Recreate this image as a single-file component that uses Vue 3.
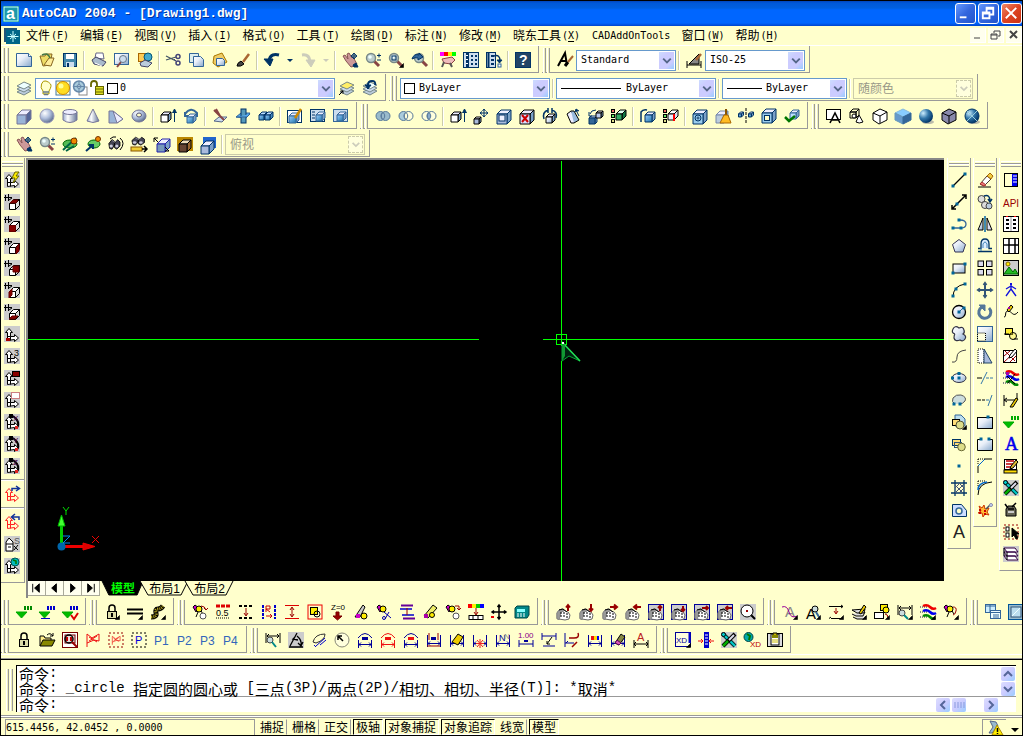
<script setup>
import { ref } from 'vue'

const p = (d, s = '#000', f = 'none', w = 1) => `<path d="${d}" stroke="${s}" fill="${f}" stroke-width="${w}"/>`
const r = (x, y, w, h, f = 'none', s = 'none') => `<rect x="${x}" y="${y}" width="${w}" height="${h}" fill="${f}" stroke="${s}"/>`
const c = (x, y, n, f = 'none', s = 'none', w = 1) => `<circle cx="${x}" cy="${y}" r="${n}" fill="${f}" stroke="${s}" stroke-width="${w}"/>`
const el = (x, y, a, b, f = 'none', s = 'none') => `<ellipse cx="${x}" cy="${y}" rx="${a}" ry="${b}" fill="${f}" stroke="${s}"/>`
const tx = (x, y, t, n, f) => `<text x="${x}" y="${y}" font-size="${n}" fill="${f}">${t}</text>`
const dashed = (s, d) => s.replace('/>', ` stroke-dasharray="${d}"/>`)
const G = 'url(#steel)', B = 'url(#blue)', N = '#036', S = '#369', K = '#000', R = '#900'

const cube = (x, y, s, d, f = G, st = K, top = '#eef', side = '#7ba0c8') =>
  p(`M${x} ${y + d}l${d} ${-d}h${s}l${-d} ${d}z`, st, top) + p(`M${x + s} ${y + d}l${d} ${-d}v${s}l${-d} ${d}z`, st, side) + p(`M${x} ${y + d}h${s}v${s}h${-s}z`, st, f)
const glass = (x = 6, y = 6) => p(`M${x + 3} ${y + 3}L${x + 8} ${y + 8}`, '#844', 'none', 3) + c(x, y, 4.5, '#bcc', '#788', 1.4) + c(x - 1, y - 1, 1.8, '#eff')
const corner = p('M15.5 11.5v4h-4z', K, K, 0.6)
const dot = (...a) => a.map(([x, y]) => r(x - 1.5, y - 1.5, 3, 3, '#069')).join('')
const pen = (x = 6, y = 2) => p(`M${x} ${y + 9}l1 -3l5 -6l2 2l-5 6z`, K, '#db3')
const hand = p('M1 4l2-1 3 4-1-5 2-1 3 5 1-1 4 7-2 2-4 1-5-6z', '#855', '#c99') + p('M11 13l3-2 2 4h-4z', N, N)
const layers = p('M1 12l7 3 7-4-7-3z', '#788', '#bcd') + p('M1 9l7 3 7-4-7-3z', '#788', '#cde') + p('M1 6l7 3 7-4-7-3z', '#788', '#eff')
const cross4 = (x, y, n, s, w = 1) => p(`M${x - n} ${y}h${2 * n}M${x} ${y - n}v${2 * n}M${x - 1.5} ${y - n + 2}l1.5-2 1.5 2M${x - 1.5} ${y + n - 2}l1.5 2 1.5-2M${x - n + 2} ${y - 1.5}l-2 1.5 2 1.5M${x + n - 2} ${y - 1.5}l2 1.5-2 1.5`, s, 'none', w)
const grey = r(0, 0, 16, 16, '#ccc')
const axis = (s = K, f = '#fff') => p('M3.5 14.5v-8h-2l3.5-4 3.5 4h-2v4h4v-2l4 3.5-4 3.5v-2z M3.5 10.5h3v4', s, f)
const ucs = grey + axis()
const house = grey + p('M1.5 1v6M4.5 0v7M0 3.5h8M5 6l3-2', K) + cube(5.5, 5.5, 6, 4, '#fff', K, '#fff', '#ddd')
const face = (d) => house + p(d, '#600', '#800')
const bin = p('M1 7l4-5 3 2v5l-3 5-3-1zM8 7l4-5 3 3v5l-4 4-3-2z', K, '#445') + c(4, 10, 2, '#ccd') + c(11, 10, 2, '#ccd') + p('M5 3l3 2 3-2', '#99a')
const tools = p('M2 2l12 12', '#033', 'none', 4) + p('M2 2l12 12', '#0cc', 'none', 2) + p('M14 2L2 14', K, 'none', 4) + p('M13 3L8 8', '#dde', 'none', 2) + p('M7 9l-5 5', '#0a0', 'none', 2.5) + c(2.5, 2.5, 2, '#0cc', K)
const dim = (s = '#009') => p('M1.5 3v12M14.5 3v12M2 11.5h12M4 9.5l-2 2 2 2M12 9.5l2 2-2 2', s)
const arc = (s, q = s) => p('M1.5 8v8M14.5 8v8M2 12.5h12M4 10.5l-2 2 2 2M12 10.5l2 2-2 2', s) + p('M1 6q7-9 14 0', s) + r(5, 5, 6, 3, q)
const fist = p('M1 15V9l2-3 4-1 2 2 3 1 2 3-1 4-4 1-6-1z', '#666', '#fff') + p('M1 14V9l2-3 3-1 2 2-3 1-1 4-1 4z', '#888', '#999') + dashed(p('M5 8v6M8 8v6M11 9v6', K, 'none', 1), '2 1') + p('M3 6l4-1 4 3', K)
const fistBox = (d) => r(0.5, 0.5, 15, 15, '#ccc', '#009') + fist + p(d, R, 'none', 2)
const gy = p('M1 3l2-2 4 3-3 4z', K, '#c0c') + c(7, 5, 3, '#fe0', K)
const loop = c(11, 12, 3, '#fff', '#555')
const paint = gy + p('M6 8l-2 5M9 7l2 3', K)
const rings = (a, b, m) => c(5.5, 8, 4.5, a, '#579') + c(10.5, 8, 4.5, b, '#579') + p('M8 4.3q3.5 3.7 0 7.4q-3.5-3.7 0-7.4', '#579', m)
const lock = p('M5 7V4q0-3 3-3t3 3v3', K, 'none', 1.5) + r(3.5, 7.5, 9, 7, '#dda', K) + r(7, 9, 2, 4, K)
const tri = (s, e = '') => p('M0 8h11l-5.5 6z', '#0a0', '#0b0') + r(8, 2, 2, 4, s) + r(11, 2, 2, 4, s) + r(14, 2, 2, 4, s) + e
const dashes = dashed(p('M1 2h14M1 14h14', K, 'none', 2), '3 2')
const brush = p('M2 14q0-3 4-5l3 3q-3 3-7 2z', K, '#444') + p('M8 10l6-8', '#a63', 'none', 2.5)
const tri3 = dashed(p('M0 3h8M0 8h8M0 13h8', '#888', 'none', 2), '1 1') + p('M3 2q4-2 7 1t6 1', '#e00', 'none', 2.5) + p('M3 7q4-2 7 1t6 1', '#00e', 'none', 2.5) + p('M3 12q4-2 7 1t5 1', '#080', 'none', 2.5)
const poly = p('M1 13C4 13 1 7 5 7S10 14 15 8', K)
const flag = (s) => p('M2 15V2l5 4 7-4v7l-5-1-7 3M4 5l8 5M12 4l-8 5', s)
const dashBox = (s) => dashed(r(1, 1, 14, 14, 'none', s), '2 2')
const dimPen = dim() + p('M3 10l6-8 5 3-5 8z', K, '#ec0')
const marks = r(0.5, 1.5, 3, 3, '#e66', K) + r(0.5, 6.5, 3, 3, '#6e6', K) + r(0.5, 11.5, 3, 3, '#dd8', K)
const spin = (t) => ucs + p('M9 2q8 6 4 12', K, 'none', 2) + r(5, 0, 4, 4, K) + tx(9, 7, t, 8, '#404') + r(11, 12, 3, 3, '#d22')

const icons = {
  app: r(0, 0, 16, 16, '#087') + r(1, 1, 14, 14, '#1a99aa', '#cff') + `<text x="3" y="13" font-size="16" font-weight="bold" fill="#fff">a</text>`,
  drawing: r(0, 0, 13, 14, '#257') + r(2, 2, 14, 14, '#068') + p('M9 3v11M3.5 8.5h11M6 6l6 5M12 6l-6 5', '#cff'),
  new: p('M.5 1.500h12l3 3v10h-15z', S, G) + p('M12.500 1.500v3h3', S, '#fff'),
  open: p('M1 4h5l1-2h6l-2 11-7 1z', '#862', '#ed6') + p('M5 13L10 6h5l-3 8z', '#862', '#fe9') + p('M3 3q6-3 8 3', '#474', 'none', 1.5),
  save: r(1.5, 1.5, 13, 13, '#48a', N) + r(4, 2, 8, 5, '#fff') + r(4, 10, 8, 5, '#cde') + r(5, 11, 2, 4, N),
  print: p('M4 6l1-5h7l1 6z', '#668', '#fff') + p('M1 8l4-3 10 5-3 4-9-2z', '#446', '#abc') + p('M4 11l7 3', '#fff'),
  preview: r(0.5, 1.5, 14, 11, G, S) + p('M7 10l-4 5', '#844', 'none', 2) + c(9, 7, 3.5, '#cde', '#678'),
  publish: r(1.5, 1.5, 7, 8, '#fc5', '#a60') + c(11, 5, 4, '#4ac', '#057') + p('M3 11l5-3 7 3-4 4-7-1z', '#446', '#bcd'),
  cut: p('M0 4l10 5M0 8l10-3', '#456', 'none', 1.3) + c(12, 4.5, 2, 'none', '#447', 1.5) + c(12, 11, 2, 'none', '#447', 1.5) + p('M8 7l3 3', '#447'),
  copy: p('M.5 1.5h9v9h-9z', S, '#dee') + p('M4.5 4.5h7l3 3v7h-10z', S, G),
  paste: p('M2 4l8-3 5 9-9 5-5-4z', '#a70', '#ec6') + p('M4.5 6.5h6l2 2v5h-8z', S, G),
  match: brush,
  undo: p('M5 9C6 2 11 2 15 3', N, 'none', 3) + p('M0 7h9l-3 7z', N, N),
  redo: p('M2 3q7-1 8 6', '#ccb', 'none', 3) + p('M6 8h9l-4 7z', '#ccb', '#ccb'),
  pan: hand + cross4(12, 4, 3, N),
  zoomrt: glass() + p('M12 3.5h4M14 1.5v4M12 8h4', N),
  zoomwin: glass() + r(4, 4, 4, 4, 'none', N) + corner,
  zoomprev: glass(8, 6) + p('M1 7q2-6 7-4v-2l4 4-5 3v-2q-3-1-6 1z', N, S),
  props: r(0, 0, 4, 4, '#f0f') + r(4, 0, 4, 4, '#f00') + r(8, 0, 4, 4, '#fe0') + r(12, 0, 4, 4, '#0f0') + p('M2 7l10-2 3 3-4 4-7-1z', '#844', '#ebb') + p('M4 10l-2 5M10 11l2 4', '#555', 'none', 2),
  center: r(0.5, 0.5, 15, 15, '#cde', N) + p('M4.5 1v14', N, 'none', 3) + [3, 7, 11].map(y => r(8, y, 2, 2, N) + r(12, y, 2, 2, N) + r(3, y, 2, 1, '#fff')).join(''),
  palette: r(0.5, 0.5, 9, 15, '#cde', N) + p('M2.5 1v14', N, 'none', 2) + [3, 7, 11].map(y => r(5, y, 3, 2, N)).join('') + p('M8 4q6-2 6 5', N, 'none', 1.5) + p('M11 8h5l-2.5 3z', N, N) + r(12, 12, 3, 3, '#fff', S),
  help: r(0.5, 0.5, 15, 15, '#246', N) + `<text x="4" y="13" font-size="14" font-weight="bold" fill="#fff">?</text>`,
  textstyle: p('M1 14L8 1l2 12M3 9h6', K, 'none', 2) + p('M8 14l3-4', K, 'none', 3) + p('M11 10l5-6', '#a63', 'none', 2),
  dimstyle: p('M1 9v7M15 9v7M1 13h14', K) + p('M3 12L13 2v10z', K, '#888') + p('M10 8l5-6', '#a63', 'none', 2.5),
  layers, layercur: layers.replaceAll('#eff', '#fe6') + p('M0 15l4-4M1.5 11H4v2.5', K),
  layerprev: layers + p('M6 9V5q0-4 4-4t3 4', N, 'none', 2) + p('M3 5h6l-3 4z', N, N),
  bulb: p('M5 11q-3-3-1.5-7T8 1t4.5 3T11 11v3H5z', '#a90', '#ffc') + p('M5 12h6M6 14.5h4', '#678', 'none', 1.5),
  sun: r(1, 1, 14, 14, '#ffc', '#47a') + c(8, 8, 6.5, '#fd2', '#c80') + c(6, 6, 2.5, '#ff9'),
  freeze: r(7, 7, 8, 8, '#fff', '#888') + c(7, 6.5, 5.5, '#acd', '#68a', 1.5) + c(7, 6.5, 2, '#eff', '#68a') + p('M1 6.5h12M7 1v11', '#68a'),
  unlock: p('M2 7V4q0-3 3-3t3 3v4', '#660', 'none', 1.8) + r(6.5, 6.5, 8, 8, '#dd2', '#660') + p('M7 9h7M7 12h7', '#660'),
  swatch: r(1.5, 3.5, 10, 10, '#fff', K),
  box: cube(1, 2, 9, 5, '#9ab4d8', '#779', '#eef', '#569'),
  sphere: c(8, 8, 7, 'url(#ball)', '#99b'),
  cylinder: p('M1 4v8q7 5 14 0V4', '#779', 'url(#tube)') + el(8, 4, 7, 2.5, '#eef', '#779'),
  cone: p('M8 1L2 13q6 3 12 0z', '#779', 'url(#tube)'),
  wedge: p('M1 3h4l10 8-6 4H1z', '#779', '#9ab4d8') + p('M5 3l10 8-6 4z', '#779', '#eef'),
  torus: el(8, 8, 7, 6, 'url(#ball)', '#779') + el(8, 7, 2.5, 2, '#ffc', '#557'),
  extrude: cube(1, 4, 7, 3, '#fff') + p('M14.5 14V2M12.5 5l2-4 2 4', N, N),
  revolve: cube(4, 6, 6, 3, B, S) + p('M2 6Q8-2 14 5v4M2 4v4h3', S, 'none', 2),
  slice: p('M2 13l5-4h8l-5 5z', '#568', '#cde') + p('M2 2l10 10M4 1l4 7', '#844', 'none', 2),
  section: p('M1 9l5-4h9l-4 5z', S, '#5ae') + r(6, 1, 5, 14, '#59b', N) + p('M1 9h11l3-3', S, '#5ae'),
  interfere: cube(1, 4, 5, 3, B, N, '#bdf', '#48b') + cube(7, 4, 5, 3, B, N, '#bdf', '#48b'),
  setdraw: r(0.5, 2.5, 14, 12, '#fff', N) + cube(2, 5, 7, 3, B, S) + p('M8 10l6-9', '#c80', 'none', 2.5),
  setview: r(0.5, 1.5, 14, 12, '#cde', N) + cube(6, 4, 6, 3, B, S) + p('M2 4h3M2 7h3M2 10h3', N),
  setprof: r(0.5, 1.5, 14, 12, '#cde', S) + cube(4, 4, 6, 3, B, S),
  union: rings('#9bc', '#9bc', '#9bc'), subtract: rings('#acd', '#ffd', '#ffd'), intersect: rings('#ffd', '#ffd', '#8ac'),
  moveface: cube(1, 9, 5, 2, '#abd') + cross4(11, 5, 4, N),
  offsetface: cube(1, 2, 10, 4, '#abd', N) + r(3, 7, 6, 6, '#eef', N),
  delface: cube(1, 2, 10, 4, '#ddf') + p('M3 7l6 7M9 7l-6 7', '#c00', 'none', 2),
  rotface: cube(4, 6, 6, 3) + p('M2 11Q0 4 6 2M14 10q2-6-4-8M6 0v5M10 0v5', N, 'none', 1.5),
  taper: p('M2 6l4-3 5 8-2 4H6z', K, '#eef') + p('M6 3h3l5 9-5 3', K, '#9bd') + p('M14 8l-3-6M10 4l1-3 3 2', N, N),
  copyface: cube(1, 8, 6, 2, '#369', N) + cube(8, 3, 5, 2, '#bce') + p('M2 6q1-4 6-4M1 4v4h3', N),
  colorface: marks + cube(5, 2, 6, 4, '#3a6', K, '#dfe', '#174'),
  copyedge: cube(5, 4, 7, 3, B, N) + p('M1 14V4q2-3 6-2', N, 'none', 1.5),
  coloredge: marks + cube(5, 2, 6, 4, '#eef', K, '#fff', '#dde') + p('M11 6v7', '#f00', 'none', 2),
  imprint: cube(1, 2, 10, 4, '#9ce', N) + c(6, 10, 3, 'none', N) + c(6, 10, 1, '#fff', N),
  clean: cube(1, 3, 8, 4, '#bcd', '#78a') + p('M11 1v6', '#850', 'none', 2) + p('M9 7h4l3 8H5z', '#a60', '#fb2'),
  separate: cube(0.5, 4, 3, 2, B, N) + cube(10.5, 4, 3, 2, B, N) + dashed(p('M8 0v16', K), '3 1'),
  shell: cube(1, 1, 10, 4, '#9ce', N) + r(3.5, 7.5, 5, 5, '#ffc', N),
  check: cube(6, 2, 6, 3, '#bdf', S) + p('M1 9l4 4 6-5', '#070', 'none', 2.5),
  shade2d: r(0.5, 1.5, 14, 10, '#fff', K) + p('M4 15l5-10 5 10M6 12h6', K, 'none', 1.6),
  shade3d: cube(1, 1, 6, 3, 'none', K, 'none', 'none') + p('M10 7l-3 7q3 2 7 0z', K, '#fff') + c(5, 8, 2, '#fff', K),
  hidden: p('M1 5l7-4 7 3v8l-8 4-6-4z', K, '#fff') + p('M1 5l7 3 7-4M8 8v7', K),
  flat: p('M0 5l8-4 8 4-8 4z', '#8bd', '#8cf') + p('M0 5l8 4v7l-8-4z', '#69b', '#69c') + p('M16 5L8 9v7l8-4z', '#369', '#369'),
  gouraud: el(10, 14, 6, 2, '#bba') + c(8, 8, 7, 'url(#deep)'),
  flatedge: p('M1 5l7-4 7 3v8l-8 4-6-4z', K, '#88a') + p('M1 5l7 3 7-4M8 8v7', K),
  gouraudedge: el(10, 14, 6, 2, '#bba') + c(8, 8, 7, 'url(#deep)', N) + p('M3 3l10 10M13 3L3 13', '#9cd', 'none', 1),
  orbit: el(8, 8, 7, 4, '#5b5', '#060') + p('M1 14L14 2M4 15l8-5', '#064', 'none', 2) + c(12, 5, 3, '#e80', '#730'),
  orbit2: el(9, 8, 6, 4, '#6c6', '#060') + c(13, 3, 2.5, '#e80', '#730') + p('M1 15l7-6M4 9h4v4', N, 'none', 2),
  swivel: `<g transform="translate(0 2) scale(.8)">${bin}</g>` + p('M12 2q6 5 0 12M2 3q3-3 6-2', K),
  distance: `<g transform="scale(.9 .65)">${bin}</g>` + r(0, 11, 11, 4, '#ec3', '#850') + p('M11 13h5M13 10l3 3-3 3', K, 'none', 1.5),
  clip: cube(3, 3, 8, 5, '#79b', '#22a') + p('M0 2l4 4M0 2h4M0 2v4M15 15l-4-4M15 15h-4', K),
  clipf: r(0, 1, 16, 14, '#b80') + cube(2, 4, 8, 4, '#643', K, '#edb', '#963'),
  clipb: r(3, 1, 13, 11, '#26c') + cube(1, 5, 8, 5, '#abd', N),

  ucs: ucs + p('M11 0l-3 6h3l-2 5 6-7h-3l3-4z', '#660', '#fe0'),
  utop: face('M6 9l3-3h5l-2 3z'), ufront: face('M5.5 9.5h6v6h-6z'), uright: face('M12 10l3-4v7l-3 3z'), uback: face('M9 6h6v6H9z'), uleft: face('M5 10l3-3v6l-3 3z'), ubottom: face('M5 15l3-3h6l-3 3z'),
  uorigin: ucs + r(2, 12, 4, 3, '#a00'), u3: ucs + tx(10, 8, '3', 9, K), uview: ucs + r(8.5, 1.5, 7, 5, '#800', K), uobj: ucs + r(7, 0, 9, 7, '#fff') + dashed(r(7.5, 0.5, 8, 6, 'none', R), '1 1'),
  ux: spin('X'), uy: spin('Y'), uz: spin('Z'),
  uapply: axis('#f22', 'none') + p('M8 5V2.5h7M12 0l3.5 2.5L12 5', '#139', 'none', 1.5),
  uprev: axis('#f22', 'none') + p('M15 6V3H8M11 0L7.5 3 11 6', '#139', 'none', 1.5),
  unamed: grey + p('M2 15V6L5 2l4 4v9zM2 8h7M4 11h3', K, '#fff') + tx(10, 8, 'S', 9, '#555') + p('M10 10l4 4M14 9l-4 5'),
  world: ucs + c(11, 4, 4, '#0bb', '#055') + p('M9 2l3 1v3', '#070', 'none', 1.5),

  line: p('M2 14L14 2', K, 'none', 1.3) + dot([2, 14], [14, 2]),
  xline: p('M1 15L15 1M1 11v4h4M15 5V1h-4', K, 'none', 1.5) + dot([6, 10]),
  pline: p('M2 12h8q5 0 5-4t-6-4', S, 'none', 1.3) + dot([2, 12], [10, 12], [8, 4]),
  polygon: p('M8 1.5l6.5 5-2.5 7.5H4L1.5 6.5z', '#335', G),
  rect: r(2, 4, 12, 9, G, K) + dot([2, 13], [14, 4]),
  arc: p('M2 15Q2 4 14 2', K) + dot([2, 14], [5, 7], [14, 2]),
  circle: c(8, 8, 6.5, G, K, 1.3) + p('M8 8l4-4', S) + dot([8, 8], [13, 4]),
  cloud: p('M4 8q-4-1-2-5t6-1q4-2 5 2 1 3-1 4 4 2 2 5-2 3-5 1-5 2-6-2 0-3 1-4', '#334', G, 1.2),
  spline: p('M1 14q5 1 5-5T15 2', '#444'),
  ellipse: el(8, 8, 7, 4.5, G, '#334') + dot([1.5, 8], [8, 3.5], [8, 8]),
  earc: p('M4 12Q0 10 2 6q3-4 8-3 6 2 4 6-2 3-6 3', '#555', '#cdd') + dot([3, 12], [9, 12]),
  insert: p('M4 1h6l4 4v7H4z', S, '#bde') + r(1.5, 5.5, 7, 6, '#fd7', K) + c(9, 11, 4, '#dd8', '#553') + corner,
  block: r(1.5, 3.5, 8, 6, '#fd7', N) + r(3.5, 6.5, 7, 5, 'none', '#357') + c(10.5, 11, 3.8, '#dd8', '#663'),
  point: dot([8, 8]),
  hatch: p('M4 0v16M13 0v16M0 3h16M0 13h16', N, 'none', 1.3) + p('M4 8l5-5M4 13L13 4M8 13l5-5M4 5l8 8M8 3l5 5', '#457'),
  region: p('M1.5 2.5h9l5 6v6h-14z', N, '#cdf') + c(8, 9, 3, '#ffc', S, 1.5),
  mtext: tx(2, 14, 'A', 18, '#222'),
  erase: p('M1 15h13', K) + p('M3 12l7-8 4 3-7 7z', '#433', '#fff') + p('M10 4l3-3 3 3-2 3z', '#a60', '#ec4') + p('M3 12l2-2 4 3-2 1z', '#a33', '#e77'),
  copyo: c(4.5, 5, 3.5, '#ddd', '#444') + c(8, 11, 3.5, '#ddd', '#444') + c(12, 12, 3, '#bcd', '#444') + p('M7 2q6-2 6 5M11 5l2 3 2-3', N, 'none', 1.5),
  mirror: p('M6 2v12H1z', K, G) + p('M10 2v12h5z', K, '#dde') + p('M8 0v16', '#06a', 'none', 1.5),
  offset: p('M1 13.5h14M1 10.5h3V6q0-5 4-5t4 5v4.5h3', N, '#def', 1.3) + p('M4 13V10M6 10V6q2-4 4 0v4', '#48b'),
  array: [[1, 1], [9.5, 1], [1, 9.5], [9.5, 9.5]].map(a => r(a[0], a[1], 5.5, 5.5, '#dde', K)).join(''),
  move: cross4(8, 8, 7, '#357', 2),
  rotate: p('M5 3a6 6 0 1 0 7 1', '#579', 'none', 3) + p('M2 1h6v6z', '#579', '#579'),
  scale: r(0.5, 0.5, 15, 15, G, S) + dashed(r(0.5, 7, 8, 8, '#ffd', K), '1 1'),
  stretch: dashed(p('M1 1h6v14H1z', K, '#fff'), '1 1') + p('M7 1v14h8z', '#246', '#abd'),
  trim: p('M0 8h5', K) + dashed(p('M9 8h7', '#37a'), '3 1') + p('M4 14L10 2', '#37a'),
  extend: dashed(p('M0 8h8', K), '4 1') + p('M11 14l4-11M9 8h3', '#37a'),
  breakpt: r(0.5, 3.5, 15, 11, G, K) + dot([11, 3]),
  brk: p('M4 3.5H.5v11h15v-11H12', K, G) + dot([4, 3], [12, 3]),
  chamfer: p('M1 15V8L8 1h7', K) + p('M1 8L8 1', '#06c') + dashed(p('M1 1h7M1 1v6', K), '1 1'),
  fillet: p('M1 15q0-12 14-13', K) + p('M1 10q0-7 9-8', '#06c', 'none', 1.5) + dashed(p('M1 1h7M1 1v6', K), '1 1'),
  explode: p('M2 4l3 2 2-3 1 4 4-1-2 4 2 3-4-1-2 3-1-4-4 0 3-2z', '#c30', '#fb3') + p('M9 7l4-4', '#456', 'none', 1.5) + dashed(p('M3 7v6M8 8v6', '#c00', 'none', 2), '2 1') + c(14, 3, 1.5, '#cdf', '#88a'),

  palettew: r(1.5, 1.5, 13, 13, '#ffc', K) + r(9, 2, 5, 12, '#00e') + p('M10 4h4M10 7h4M10 10h4', '#fff'),
  api: tx(0, 13, 'API', 10, '#900'),
  blocks: r(0.5, 0.5, 15, 15, '#fff', K) + [3, 7, 11].map(y => r(3, y, 3, 2, K) + r(10, y, 3, 2, K)).join('') + p('M8 1v14', '#999') + r(3, 0, 2, 1, '#f00') + r(11, 0, 2, 1, '#f00'),
  window: r(0.5, 0.5, 15, 15, '#fff', K) + p('M6 0v16M0 7h16M12 0v16', K, 'none', 1.5),
  image: r(0.5, 0.5, 15, 15, '#ccc', K) + p('M1 14l5-7 4 5 2-3 3 5z', '#060', '#2b2') + c(5, 4, 2, '#fe0', '#860'),
  walk: p('M8 2v5L3 14M8 7l5 7M3 7l5-3 5 3', '#11d', 'none', 1.3) + r(7, 1, 2, 2, '#11d'),
  sketch: poly + p('M4 6l4-5 2 2-4 5z', K, '#ec0') + r(5, 3, 2, 2, '#a0a'),
  overlap: r(2.5, 2.5, 7, 6, '#fe3', K) + c(10, 10, 3.5, '#fe36', K) + p('M1 8h5M11 13h4', K),
  hatchpen: r(0.5, 2.5, 13, 12, '#fff', K) + p('M1 14L13 3M1 8l6-5M7 14l6-6M2 3l10 10', R) + pen(6, 1).replace('#db3', '#fff'),
  stripes: tri3 + p('M5 13L12 4M12 14l-8-8', K) + r(3, 2, 3, 3, '#a0a'),
  dimpen: p('M1 3v11M14 1v7M1 8h13M4 6l-3 2 3 2', K) + p('M7 15l6-9 2 1-5 8z', K, '#ec0'),
  greendim: tri('#0a0'), bigA: '<text x="2" y="14" font-size="18" font-family="Liberation Serif" stroke="#00e" stroke-width=".5" fill="#00e">A</text>',
  notes: r(1.5, 1.5, 12, 10, '#fff', K) + p('M3 3h8M3 6h7M3 9h5', '#b00', 'none', 1.5) + pen(7, 2) + r(1, 12, 13, 3, '#fd0', K),
  tools: grey + tools, bag: p('M3 7l2-3h6l2 3v7H3z', K, '#665') + p('M2 2l3 4M13 1L9 5M5 7h6', K, 'none', 1.5) + r(5, 9, 6, 2, '#ccc'),
  pick: dashBox(R) + r(3, 3, 3, 4, '#fff', K) + r(3, 9, 3, 4, '#fff', K) + p('M9 4v9l2-2 2 4 2-1-2-4h3z', K, K),
  sheets: grey + p('M1 10l3 4h11l-3-4zM1 6l3 4h11l-3-4zM1 2l3 4h11l-3-4z', '#304', '#fff') + p('M1 2v8M4 6v8', K),

  vg: tri('#080'), vb: tri('#00c', p('M2 14.5h9', '#00c')), vr: tri('#00c', p('M9 11l3 4 4-6', '#d00', 'none', 2)),
  lockc: lock + corner, lock, lines: p('M0 5.5h16M0 9.5h16', K, 'none', 2) + corner,
  snake: p('M1 13q6 0 5-4t2-4 5-3', K, 'none', 5) + dashed(p('M1 13q6 0 5-4t2-4 5-3', '#ba2', 'none', 3), '1 1') + corner,
  gy: paint + loop + p('M9 2q4 0 5 4M12 4l2 2 2-2', R),
  os: dashed(p('M1 2h14', '#d00', 'none', 3), '4 1') + tx(1, 12, '0.5', 9, K) + dashed(p('M1 14h14', K), '1 1'),
  dashv: dashes + p('M8 4v7M6 9l2 3 2-3', R), rb: dashed(p('M2 1v14M14 1v14', '#00c', 'none', 2), '3 1') + p('M5 8V2h4v3H5l4 3M5 12h6M9 10l2 2-2 2', '#c00'),
  redv: p('M1 1.5h14M1 14.5h14', '#d00') + p('M8 4v8M6 6l2-3 2 3M6 10l2 3 2-3', R),
  redbox: r(1, 1, 14, 14, '#ffc', '#e00') + r(3.5, 3.5, 7, 7, '#fe0', K) + c(10, 10, 3, 'none', K),
  z0: tx(1, 6, 'Z=0', 8, K) + p('M6 8h3v4h3l-4.5 4L3 12h3z', '#700', R),
  brushy: p('M2 13L10 1l2 2-5 10z', K, '#ccc') + r(3, 10, 4, 4, '#c0c') + c(11, 12, 3, '#fe0', K),
  cutter: gy + p('M8 8l7 6M13 8l-4 7', '#00a') + c(8, 14, 1.5, 'none', '#00a'),
  between: p('M2 1.5h12M4 14.5h12', '#609', 'none', 2) + p('M1 5h12M3 11h12', '#00c', 'none', 1.5) + p('M8 4v7', R),
  brushy2: p('M2 12L11 1l4 3-9 10z', K, '#ee6') + r(2, 10, 4, 4, '#a0a') + c(10, 11, 2.5, '#fe0', K),
  swap: gy + loop + p('M10 2h4v4M12 4l2 2 2-2', R),
  palette4: r(0, 0, 4, 4, '#f00') + r(4, 0, 4, 4, '#fe0') + r(8, 0, 4, 4, '#0c0') + r(12, 0, 4, 4, '#00f') + p('M8 4v6M6 8l2 3 2-3', R) + r(1, 11.5, 14, 4, '#fff', K) + p('M5 11v5M10 11v5'),
  movek: cross4(8, 8, 7, K, 1.5) + r(0, 12, 3, 2, '#e00'),
  calc: p('M1 4l2-2h12v9l-2 3H1z', '#044', '#088') + r(3, 5, 8, 3, '#8ff') + dashed(p('M3 10h9M3 12h9', '#fff'), '2 1'),
  fu: fist + p('M12 7V1M10 3.5L12 1l2 2.500', R, 'none', 2), fd: fist + p('M12 0v7M10 4.5L12 7l2-2.5', R, 'none', 2), fr: fist + p('M8 3h7M12 0.5L15 3l-3 2.500', R, 'none', 2), fl: fist + p('M16 3H9M12 0.5L9 3l3 2.500', R, 'none', 2),
  bu: fistBox('M12 7V2M10 4l2-2 2 2'), bd: fistBox('M12 2v5M10 5l2 2 2-2'), br: fistBox('M8 4h6M12 2l2 2-2 2'), bl: fistBox('M15 4H9M11 2L9 4l2 2'),
  find: grey + p('M10 10l5 5', K, 'none', 2) + c(7, 7, 6, '#fff', K) + r(6, 6, 2, 2, R),
  aw: tx(3, 13, 'A', 15, '#888') + p('M0 3q5-2 7 5t8 4', '#909') + corner, ag: tx(1, 15, 'A', 15, K) + c(10, 5, 3, '#cdd', K) + p('M11 8l3 5', S, 'none', 2) + corner,
  arrows: p('M1 2.5h14M3 14.5h12M13 1l2 1.5L13 4M3 13l-2 1.5', K) + p('M8 4v5M6 7l2 3 2-3', R) + corner,
  stackp: p('M2 13l4 2h7l2-3M1 10l4 2h7l2-4M1 6l5 3h7l1-4z', K, '#ddd') + p('M8 9l5-8 2 2-5 7z', K, '#ec0') + corner,
  yb: r(6.5, 0.5, 7, 6, '#fe0', K) + c(12, 6, 3, '#fe0', K) + r(0.5, 8.5, 9, 6, '#fff', K) + p('M11 10q3 0 3 4', R) + corner,
  dimfind: p('M1 1v10M15 1v10M2 4h12M4 2L2 4l2 2M12 2l2 2-2 2', K) + c(5, 9, 3, '#cdd', '#444') + p('M7 11l4 4', '#088', 'none', 2) + corner,
  tri3: tri3 + corner, gyc: paint + p('M10 3q4 0 3 4t-3 4', R) + corner,
  cascade: r(0.5, 0.5, 10, 8, '#cef', S) + r(5.5, 6.5, 10, 8, '#eff', S) + p('M1 2h9M6 8.5h9M5 1v7M8 11h6M8 13h6', S), full: r(0.5, 0.5, 15, 15, '#9bc', '#059') + r(3, 3, 10, 10, '#bde', '#357') + p('M4 12l8-8', '#eff'),

  folder: p('M1 14V4h4l1 2h6v2', K, '#fe8') + p('M1 14l3-6h12l-3 6z', K, '#880') + p('M8 3q3-3 6 1M14 1v3h-3', K),
  target: r(0.5, 0.5, 15, 15, '#fff', '#700') + r(3, 3, 10, 8, '#edd', '#700') + c(7, 7, 4, 'none', K, 1.5) + p('M5 5v4M9 5v4', '#b00', 'none', 2) + p('M10 10l5 5', R, 'none', 2),
  flag: flag('#e11'), flagbox: dashBox('#900') + `<g transform="translate(3 3) scale(.65)">${flag('#e11')}</g>`,
  pbox: dashBox(K) + tx(4, 12, 'P', 11, '#00d'),
  p1: tx(0, 13, 'P1', 12, '#36b'), p2: tx(0, 13, 'P2', 12, '#36b'), p3: tx(0, 13, 'P3', 12, '#36b'), p4: tx(0, 13, 'P4', 12, '#36b'),
  dk: p('M1 1v10M15 1v10M2 4h12M4 2L2 4l2 2M12 2l2 2-2 2', K) + c(5, 8, 3, '#cdd', '#444') + p('M7 10l4 5', '#088', 'none', 2),
  angle: grey + p('M1 15h14M2 14L9 1M9 4q5 4 4 9M10 11l3 3 2-4M7 5l-2 2 5 1', K, 'none', 1.3),
  leaf: p('M2 10Q4 2 14 2q0 6-9 9z', '#333') + p('M3 13l2 2M9 13l6-5M5 14l9-8', '#00c'),
  dial: c(8, 8, 7, '#ffd', '#887') + p('M4 4l5 5M4 8V4h4', K, 'none', 1.5),
  ab: arc('#009'), ar: arc('#e11'), am: arc('#009', '#e11'),
  rdim: dim() + r(5, 5, 5, 3, '#009') + p('M3 1v7M12 1v7M1 14h13', R),
  dimPen, star: dim() + p('M8 7v9M4 11.5h8M5 8l6 7M11 8l-6 7', '#e22'), nn: dim() + tx(4, 9, 'N', 9, '#009') + tx(9, 7, 'N', 8, '#888'),
  d100: tx(0, 6, '1.00', 8, '#808') + p('M1 8v7M15 8v7M1 12h14', '#009') + r(6, 8, 4, 2, '#009'),
  dswap: p('M1 1v7M15 1v7M1 4h14M2 14h12', '#009') + p('M11 5l-5 7M6 9v3h3', K),
  dundo: p('M1 1v14M1 11h9M4 9l-2 2', '#009') + p('M5 6h5q6 0 4-5M13 10l-5 5', R, 'none', 1.5),
  dcol: dim() + r(4, 4, 3, 4, '#e11') + r(7, 4, 3, 4, '#fd0') + r(10, 4, 2, 4, '#00e'), der: dim() + p('M5 11l6-9 4 3-6 8z', K, '#884') + p('M5 11l2-3 4 3-2 2z', '#505', '#d5b'),
  adim: tx(4, 9, 'A', 11, '#b22') + p('M1 8v8M15 8v8M1 12h14M3 10l-2 2 2 2M13 10l2 2-2 2', K),
  xd: r(0.5, 0.5, 15, 14, '#ffd', '#009') + tx(1, 11, 'XD', 8, '#009') + p('M14.5 0v11', '#00c', 'none', 2) + corner,
  squeeze: r(6, 0, 5, 16, '#00c') + p('M7 3h3M7 6h3M7 9h3M7 12h3', '#fff') + p('M0 9h5M3 7l2 2-2 2M16 9h-5M13 7l-2 2 2 2', '#e11'),
  toolx: grey + tools, globe: c(4.5, 5, 4.5, '#0aa', '#044') + p('M3 2l3 2-1 4', '#070', 'none', 2) + tx(6, 15, 'XD', 8, '#b00'),
  clipb2: r(0.5, 1.5, 15, 13, '#ddd', K) + r(4, 2, 8, 11, '#fff', K) + p('M6 3V1h4v2', K, '#cb0') + r(5, 3, 6, 3, '#880') + p('M5 8h6M5 10h6', '#cb0'),
  warn: p('M3 1l6 1 2 4-6 7H2l4-6z', '#568', '#9bc') + p('M10 5l6 10H5z', '#a80', '#fe0') + p('M10.5 8v4M10.5 13v1', K, 'none', 1.5),
}

const row = (s) => s.split(' ')
const sel = (label, value, w, kind = '', off = false) => ({ label, value, w, kind, off })
const topRows = [
  [[...row('new open save | print preview publish | cut copy paste match | undo v redo w | pan zoomrt zoomwin zoomprev | props center palette | help')],
    ['textstyle', sel('文字样式', 'Standard', 100), '|', 'dimstyle', sel('标注样式', 'ISO-25', 100)]],
  [['layers', sel('图层', '0', 300, 'layer'), 'layercur', 'layerprev'],
    [sel('颜色', 'ByLayer', 150, 'color'), '|', sel('线型', 'ByLayer', 160, 'ltype'), '|', sel('线宽', 'ByLayer', 125, 'lweight'), '|', sel('打印样式', '随颜色', 120, 'zhs', true)]],
  [row('box sphere cylinder cone wedge torus | extrude revolve | slice section interfere | setdraw setview setprof'),
    row('union subtract intersect | extrude moveface offsetface delface rotface taper copyface colorface | copyedge coloredge | imprint clean separate shell check'),
    row('shade2d shade3d hidden flat gouraud flatedge gouraudedge')],
  [[...row('pan zoomrt orbit orbit2 swivel distance clip clipf clipb |'), sel('视图', '俯视', 140, 'zhs', true)]],
]
const bottomRows = [
  [row('vg vb vr'), row('lockc lines snake'), row('gy os dashv rb redv redbox z0 brushy cutter between brushy2 swap palette4 movek calc'),
    row('fu fd fr fl bu bd br bl find'), row('aw ag arrows stackp yb dimfind tri3 gyc'), row('cascade full')],
  [row('lock folder target flag flagbox pbox p1 p2 p3 p4'), row('dk angle leaf dial ab ar am rdim dimPen star nn d100 dswap dundo dcol der adim'), row('xd squeeze toolx globe clipb2')],
]
const leftBar = row('ucs utop ufront uright uback uleft ubottom uorigin u3 uview uobj ux uy uz | uapply | uprev unamed world')
const rightBars = [
  row('line xline pline polygon rect arc circle cloud spline ellipse earc insert block point hatch region mtext'),
  row('erase copyo mirror offset array move rotate scale stretch trim extend breakpt brk chamfer fillet explode'),
  row('palettew api blocks window image walk sketch overlap hatchpen stripes dimpen greendim bigA notes tools bag pick sheets'),
]
const menus = [['文件', 'F'], ['编辑', 'E'], ['视图', 'V'], ['插入', 'I'], ['格式', 'O'], ['工具', 'T'], ['绘图', 'D'], ['标注', 'N'], ['修改', 'M'], ['晓东工具', 'X'], ['', '', 'CADAddOnTools'], ['窗口', 'W'], ['帮助', 'H']]
const modes = ref([['捕捉', false], ['栅格', false], ['正交', false], ['极轴', true], ['对象捕捉', true], ['对象追踪', true], ['线宽', false], ['模型', true]])
const tabs = ['模型', '布局1', '布局2']
const tab = ref(0)
const command = ref('')
const split = (s) => s.split(/([\u3000-\u9fff]+)/).filter(Boolean).map(t => ({ t, zh: /[\u3000-\u9fff]/.test(t) }))
const history = [split('命令:'), split('命令: _circle 指定圆的圆心或 [三点(3P)/两点(2P)/相切、相切、半径(T)]: *取消*')]
const winButtons = [['最小化', 'M4 14h7', ''], ['还原', 'M4 9h7v6H4zM4 10h7M8 8V4h7v7h-3M8 5h7', ''], ['关闭', 'M4 4l11 11M15 4L4 15', 'close']]
const mdiButtons = [['最小化文档', 'M4 10h6'], ['还原文档', 'M3 6h6v5H3zM3 7h6M6 5V3h6v5h-2'], ['关闭文档', 'M4 3l7 7M11 3l-7 7']]
const navs = [['第一个', 'M5 3v9M12 3L7 7.5l5 4.5z'], ['上一个', 'M11 3L6 7.5l5 4.5z'], ['下一个', 'M7 3l5 4.5L7 12z'], ['最后一个', 'M13 3v9M6 3l5 4.5L6 12z']]
</script>

<template>
  <div class="window">
    <svg class="defs" width="0" height="0" aria-hidden="true">
      <defs>
        <linearGradient id="steel" x1="0" y1="0" x2="1" y2="1"><stop offset="0" stop-color="#fff" /><stop offset=".4" stop-color="#e8eef8" /><stop offset="1" stop-color="#88a8cc" /></linearGradient>
        <linearGradient id="tube"><stop offset="0" stop-color="#99aacc" /><stop offset=".35" stop-color="#fff" /><stop offset="1" stop-color="#667799" /></linearGradient>
        <linearGradient id="blue" x1="0" y1="0" x2="1" y2="1"><stop offset="0" stop-color="#9cf" /><stop offset="1" stop-color="#27a" /></linearGradient>
        <radialGradient id="ball" cx=".35" cy=".3" r=".75"><stop offset="0" stop-color="#fff" /><stop offset=".5" stop-color="#b0bfdc" /><stop offset="1" stop-color="#568" /></radialGradient>
        <radialGradient id="deep" cx=".3" cy=".3" r=".75"><stop offset="0" stop-color="#cef" /><stop offset=".5" stop-color="#37a" /><stop offset="1" stop-color="#036" /></radialGradient>
      </defs>
    </svg>

    <header class="title">
      <svg class="icon" viewBox="0 0 16 16" v-html="icons.app" />
      <h1>AutoCAD 2004 - [Drawing1.dwg]</h1>
      <button v-for="b in winButtons" :key="b[0]" :class="['win', b[2]]" :aria-label="b[0]"><svg viewBox="0 0 20 20"><path :d="b[1]" /></svg></button>
    </header>

    <nav class="menu">
      <svg class="icon" viewBox="0 0 16 16" v-html="icons.drawing" />
      <button v-for="m in menus" :key="m[1]"><span>{{ m[0] }}</span><span v-if="m[2]" class="mono">{{ m[2] }}</span><span v-else class="mono">(<u>{{ m[1] }}</u>)</span></button>
      <span class="fill" />
      <button v-for="b in mdiButtons" :key="b[0]" class="mdi" :aria-label="b[0]"><svg viewBox="0 0 15 15"><path :d="b[1]" /></svg></button>
    </nav>

    <div v-for="(bars, i) in topRows" :key="'t' + i" class="row">
      <div v-for="(bar, j) in bars" :key="j" class="bar" role="toolbar">
        <i class="grip" />
        <template v-for="(it, k) in bar" :key="k">
          <i v-if="it === '|'" class="sep" />
          <button v-else-if="it === 'v' || it === 'w'" :class="['drop', it]" aria-label="更多" />
          <span v-else-if="it.label" :class="['combo', it.kind, { off: it.off }]" :style="{ width: it.w + 'px' }">
            <span class="lead">
              <template v-if="it.kind === 'layer'"><svg v-for="n in ['bulb', 'sun', 'freeze', 'unlock', 'swatch']" :key="n" class="icon" viewBox="0 0 16 16" v-html="icons[n]" /></template>
              <svg v-if="it.kind === 'color'" class="icon" viewBox="0 0 16 16" v-html="icons.swatch" />
            </span>
            <select :aria-label="it.label" :disabled="it.off"><option>{{ it.value }}</option></select>
            <svg class="chev" viewBox="0 0 15 18"><path d="M4 7l4 4 4-4" /></svg>
          </span>
          <button v-else class="tool" :aria-label="it"><svg class="icon" viewBox="0 0 16 16" v-html="icons[it]" /></button>
        </template>
      </div>
    </div>

    <main class="work">
      <div class="side">
        <div class="vbar" role="toolbar">
          <i class="vgrip" />
          <template v-for="(n, k) in leftBar" :key="k"><i v-if="n === '|'" class="vsep" /><button v-else class="tool" :aria-label="n"><svg class="icon" viewBox="0 0 16 16" v-html="icons[n]" /></button></template>
        </div>
      </div>
      <section class="doc">
        <svg class="canvas" role="img" aria-label="模型空间">
          <g stroke="#00ff00" fill="none" shape-rendering="crispEdges">
            <path d="M0 179.5h451M515 179.5h24M533.5 1v185M528.5 174.5h10v10h-10z" />
            <line x1="539" y1="179.5" x2="100%" y2="179.5" />
            <line x1="533.5" y1="201" x2="533.5" y2="100%" />
          </g>
          <path d="M534 182l18 19-11-5-7 5z" fill="#021" stroke="#0a3" />
          <path d="M534 182l18 19" stroke="#2d5" stroke-width="1.5" />
          <path d="M534 201V182l3 3v11z" fill="#193" />
          <path d="M534 182h2v2h-2z" fill="#fff" />
          <g fill="none">
            <path d="M33.5 385V364" stroke="#0c0" stroke-width="3" /><path d="M30 366l3.5-11 3.5 11z" fill="#4f3" stroke="#0b0" />
            <path d="M36 386.5h20" stroke="#e00" stroke-width="3" /><path d="M55 383l12 3.5-12 3.5z" fill="#d00" stroke="#e00" />
            <circle cx="33.5" cy="386.5" r="4" fill="#06a" />
            <path d="M35 347l3 4 3-4M38 351v4" stroke="#0d0" />
            <path d="M64 376l7 7M71 376l-7 7" stroke="#e00" /><path d="M35 376h7l-7 7h7" stroke="#08e" />
          </g>
        </svg>
        <div class="tabs">
          <button v-for="n in navs" :key="n[0]" class="nav" :aria-label="n[0]"><svg viewBox="0 0 18 15"><path :d="n[1]" /></svg></button>
          <button v-for="(t, i) in tabs" :key="t" :class="['tab', { on: tab === i }]" @click="tab = i"><svg viewBox="0 0 49 15" preserveAspectRatio="none"><path d="M0 0L8 14H41L48 0" /></svg><span>{{ t }}</span></button>
        </div>
      </section>
      <div class="side right">
        <div v-for="(bar, i) in rightBars" :key="i" class="vbar" role="toolbar">
          <i class="vgrip" />
          <button v-for="n in bar" :key="n" class="tool" :aria-label="n"><svg class="icon" viewBox="0 0 16 16" v-html="icons[n]" /></button>
        </div>
      </div>
    </main>

    <div v-for="(bars, i) in bottomRows" :key="'b' + i" class="row">
      <div v-for="(bar, j) in bars" :key="j" class="bar" role="toolbar">
        <i class="grip" />
        <button v-for="n in bar" :key="n" class="tool" :aria-label="n"><svg class="icon" viewBox="0 0 16 16" v-html="icons[n]" /></button>
      </div>
    </div>

    <section class="command">
      <i class="grip" />
      <div class="console">
        <div class="log">
          <div class="lines">
            <p v-for="(l, i) in history" :key="i"><span v-for="(s, k) in l" :key="k" :class="{ zh: s.zh }">{{ s.t }}</span></p>
          </div>
          <div class="updown">
            <button class="scroll" aria-label="向上"><svg viewBox="0 0 14 14"><path d="M3 9l4-4 4 4" /></svg></button>
            <button class="scroll" aria-label="向下"><svg viewBox="0 0 14 14"><path d="M3 5l4 4 4-4" /></svg></button>
          </div>
        </div>
        <div class="prompt">
          <label for="cmd"><span class="zh">命令</span>:</label>
          <input id="cmd" v-model="command" type="text" autocomplete="off">
          <button class="scroll" aria-label="向左"><svg viewBox="0 0 14 14"><path d="M9 3L5 7l4 4" /></svg></button>
          <button class="scroll thumb" aria-label="滑块"><svg viewBox="0 0 14 14"><path d="M3 4v6M6 4v6M9 4v6M12 4v6" /></svg></button>
          <span class="track" />
          <button class="scroll" aria-label="向右"><svg viewBox="0 0 14 14"><path d="M5 3l4 4-4 4" /></svg></button>
        </div>
      </div>
    </section>

    <footer class="status">
      <output class="coords mono">615.4456, 42.0452 , 0.0000</output>
      <button v-for="m in modes" :key="m[0]" :class="{ on: m[1] }" :aria-pressed="m[1]" @click="m[1] = !m[1]">{{ m[0] }}</button>
      <span class="fill" />
      <span class="tray"><svg class="icon" viewBox="0 0 16 16" v-html="icons.warn" /></span>
      <button class="drop v" aria-label="状态栏菜单" />
    </footer>
  </div>
</template>

<style>
html, body { margin: 0; background: #ffffcc; }
</style>

<style scoped>
.window, .window * { box-sizing: border-box; }
.window { height: 100vh; min-height: 736px; display: flex; flex-direction: column; border: 1px solid #000; background: #ffffcc; color: #000; overflow: hidden; font: 12px/14px "Liberation Sans", "Noto Sans CJK SC", sans-serif; }
.defs { position: absolute; }
button { margin: 0; padding: 0; border: 0; background: none; font: inherit; color: inherit; flex: none; }
button svg { display: block; }
.icon { width: 16px; height: 16px; flex: none; display: block; overflow: visible; }
.mono { font: 10px/14px "DejaVu Sans Mono", "Liberation Mono", monospace; }
.fill { flex: 1; }

.title { flex: none; height: 25px; display: flex; align-items: center; padding: 0 0 0 2px; gap: 2px; background: linear-gradient(#0044bb 0, #0058d8 2px, #0060e0 7px, #0066ff 9px, #0066ff 22px, #0044cc 25px); }
.title h1 { flex: 1; margin: 0 0 0 1px; color: #fff; font: bold 13px/20px "Liberation Mono", monospace; text-shadow: 1px 1px #003399; }
.win { width: 21px; height: 21px; border: 1px solid #fff; border-radius: 3px; background: linear-gradient(135deg, #6699ff, #3366dd 50%, #2255cc); }
.win.close { background: linear-gradient(135deg, #ee8866, #dd4422 50%, #cc3311); }
.win path { stroke: #fff; stroke-width: 2; fill: none; }

.menu { flex: none; height: 20px; display: flex; align-items: center; padding: 0 0 0 3px; border-bottom: 1px solid #fff; }
.menu button { display: flex; align-items: center; gap: 1px; padding: 0 5px 0 6px; height: 18px; font-size: 12px; }
.menu u { text-underline-offset: 2px; }
.menu button.mdi { width: 16px; height: 15px; margin-left: 2px; padding: 0; border: solid #fff; border-width: 0 1px 1px 0; background: #ffffee; }
.mdi path { stroke: #444; stroke-width: 1; fill: none; }
.mdi:last-child path { stroke-width: 2; }

.row { flex: none; height: 28px; display: flex; gap: 3px; }
.bar { height: 27px; display: flex; align-items: center; padding: 2px 4px 0 0; border: solid #999; border-width: 0 1px 1px 0; }
.grip { flex: none; width: 11px; height: 25px; background: linear-gradient(90deg, transparent 1px, #fff 1px 2px, #eeeebb 2px 3px, #999 3px 4px, transparent 4px 5px, #fff 5px 6px, #eeeebb 6px 7px, #999 7px 8px, transparent 8px); }
.sep { flex: none; width: 6px; height: 19px; background: linear-gradient(90deg, transparent 2px, #ccccaa 2px 3px, #fff 3px 4px, transparent 4px); }
.tool { width: 23px; height: 22px; display: flex; align-items: center; justify-content: center; }
.drop { width: 13px; height: 16px; position: relative; }
.drop::after { content: ""; display: block; margin: 0 auto; width: 0; border: 3px solid transparent; border-top-color: #003366; border-bottom: 0; }
.drop.w::after { border-top-color: #ccccbb; }

.combo { position: relative; flex: none; height: 21px; display: block; }
.combo select { appearance: none; width: 100%; height: 21px; padding: 0 18px 0 4px; margin: 0; border: 1px solid #6699cc; border-radius: 0; background: #fff; color: #000; opacity: 1; font: 10px/18px "DejaVu Sans Mono", "Noto Sans CJK SC", monospace; }
.combo.zhs select { font: 12px/18px "Noto Sans CJK SC", sans-serif; padding-left: 4px; }
.combo.off select { background: #ffffcc; color: #999988; border: 1px solid #ccccaa; }
.combo.layer select { padding-left: 84px; }
.combo.color select { padding-left: 18px; }
.combo.ltype select { padding-left: 69px; }
.combo.lweight select { padding-left: 43px; }
.lead { position: absolute; left: 3px; top: 2px; display: flex; pointer-events: none; }
.ltype .lead { top: 10px; left: 5px; width: 60px; height: 1px; background: #000; }
.lweight .lead { top: 10px; left: 5px; width: 35px; height: 1px; background: #000; }
.layer .lead { gap: 1px; }
.chev { position: absolute; right: 2px; top: 2px; width: 15px; height: 17px; background: linear-gradient(135deg, #ccddff, #ccccff 30%, #ccccff 70%, #99ccff); pointer-events: none; }
.chev path { fill: none; stroke: #556688; stroke-width: 2; }
.off .chev { background: #ffffdd; border: 1px dashed #ccccaa; }
.off .chev path { stroke: #ccccbb; }

.work { flex: 1; min-height: 0; display: flex; }
.side { flex: none; display: flex; gap: 2px; padding-right: 1px; }
.side.right { padding: 0 0 0 3px; }
.vbar { align-self: flex-start; width: 24px; padding: 0 0 5px; border: solid #999; border-width: 0 1px 1px 0; overflow: hidden; }
.right .vbar { border-left: 1px solid #fff; }
.right .vbar:last-child { width: 23px; border-right: 0; }
.vbar .tool { width: 22px; }
.vgrip { display: block; height: 11px; margin: 0 1px; background: linear-gradient(transparent 3px, #fff 3px 4px, transparent 4px 5px, #999 5px 6px, #fff 6px 7px, transparent 7px 8px, #999 8px 9px, transparent 9px); }
.vsep { display: block; height: 6px; background: linear-gradient(transparent 2px, #999 2px 3px, #fff 3px 4px, transparent 4px); }
.doc { flex: 1; min-width: 0; display: flex; flex-direction: column; border: solid #888; border-width: 2px 0 0 2px; }
.canvas { flex: 1; min-height: 0; width: 100%; display: block; background: #000; }
.tabs { flex: none; height: 16px; display: flex; margin-bottom: 1px; }
.nav { width: 18px; height: 15px; border: solid #aaaa99; border-width: 0 1px 1px 0; background: #ffffee; }
.nav path { fill: #000; stroke: #000; }
.tab { position: relative; width: 49px; height: 15px; margin-right: -4px; font: 12px/14px "Liberation Sans", "Noto Sans CJK SC", sans-serif; }
.tab svg { position: absolute; inset: 0; width: 49px; height: 15px; overflow: visible; }
.tab path { fill: #ffffcc; stroke: #000; }
.tab span { position: relative; }
.nav + .tab { margin-left: 2px; width: 42px; }
.nav + .tab svg { width: 42px; }
.tab.on path { fill: #000; }
.tab.on span { color: #00ff00; font-weight: bold; }

.command { flex: none; height: 64px; display: flex; padding: 10px 6px 4px 4px; border-top: 1px solid #fff; border-bottom: 1px solid #999; background: linear-gradient(transparent 3px, #999 3px 4px, #000 4px 5px, transparent 5px 60px, #999 60px 61px, #fff 61px 62px, transparent 62px); }
.command .grip { height: 42px; margin-top: 4px; }
.console { flex: 1; min-width: 0; display: flex; flex-direction: column; border: solid #000; border-width: 1px 0 0 1px; margin-bottom: 1px; background: #fff; font: 14px/15px "Liberation Mono", monospace; }
.zh { font: 15px/15px "Noto Sans CJK SC", sans-serif; }
.log { flex: none; height: 31px; display: flex; justify-content: space-between; border-bottom: 1px solid #999; }
.lines { padding: 0 0 0 2px; }
.lines p { margin: 0; height: 15px; white-space: pre; display: flex; align-items: center; }
.updown { display: flex; flex-direction: column; gap: 1px; padding: 1px 1px 0 0; }
.scroll { width: 14px; height: 14px; border-radius: 2px; background: linear-gradient(135deg, #ddddff, #ccccff 50%, #99ccff); }
.scroll path { fill: none; stroke: #556699; stroke-width: 2; }
.thumb { margin-left: 2px; }
.thumb path { stroke-width: 1; stroke: #8899dd; }
.prompt { flex: 1; display: flex; align-items: center; padding: 0 18px 0 2px; }
.prompt label { display: flex; align-items: center; }
.prompt input { flex: 1; min-width: 0; height: 15px; padding: 0 4px; border: 0; outline: 0; background: none; font: inherit; }
.track { width: 18px; }

.status { flex: none; height: 17px; display: flex; align-items: stretch; gap: 2px; padding: 1px 0 0 4px; }
.status button { height: 16px; padding: 1px 2px 0; border: 1px solid transparent; border-right-color: #999; font-size: 12px; line-height: 14px; }
.status button.on { border-color: #000 #fff #fff #000; }
.status .coords { flex: none; width: 250px; padding-top: 1px; border: solid #999; border-width: 1px 1px 0 1px; }
.tray { width: 24px; display: flex; align-items: center; justify-content: center; border: solid #999; border-width: 1px 0 0 1px; }
.status button.drop { width: 14px; border: 0; }
.status .drop::after { border-top-color: #000; border-width: 4px 4px 0; margin-top: 4px; }
</style>
